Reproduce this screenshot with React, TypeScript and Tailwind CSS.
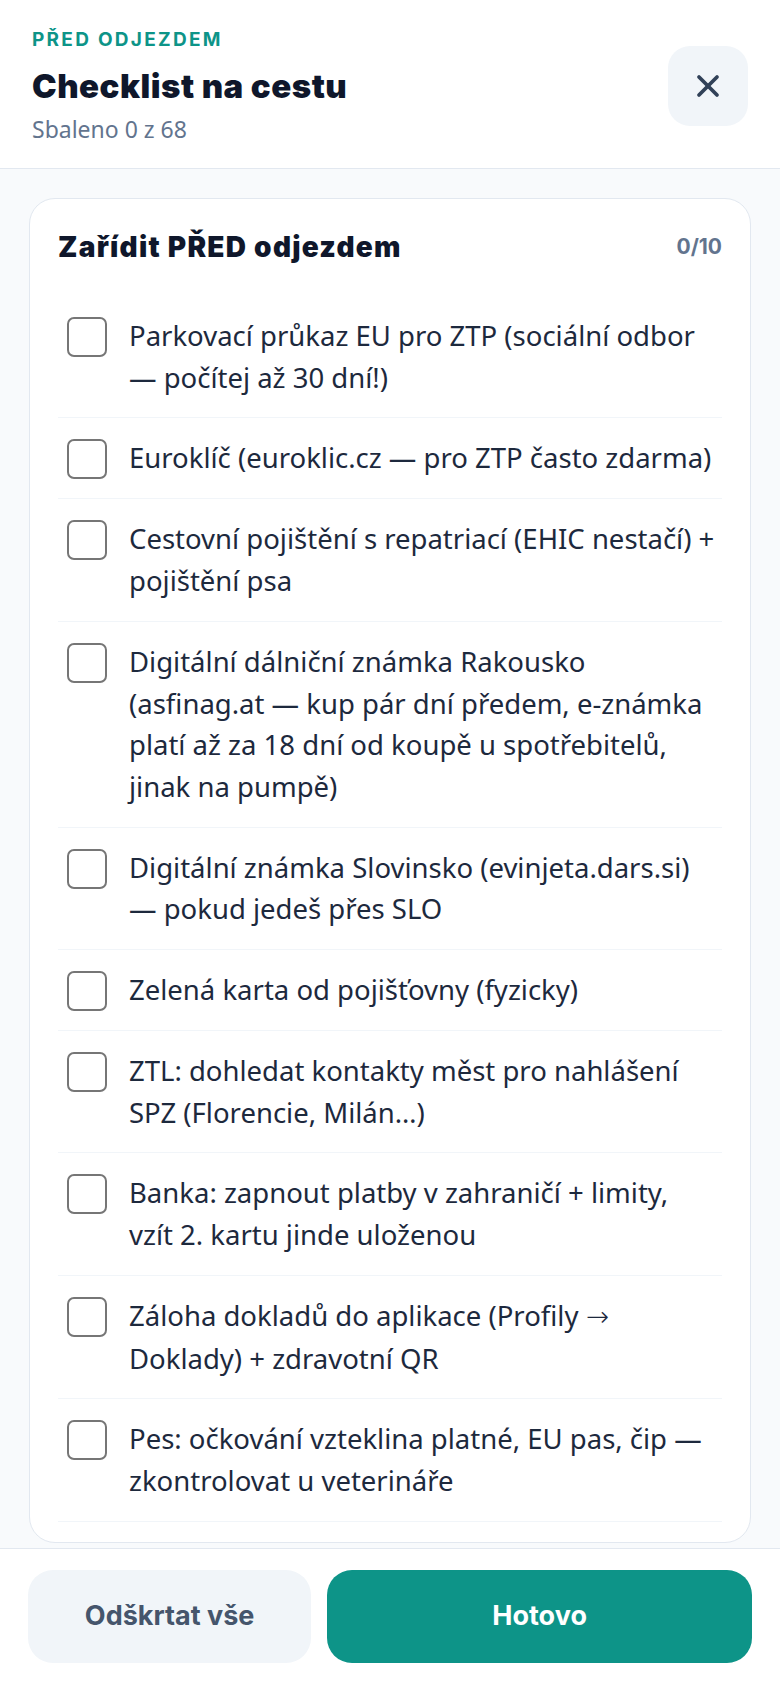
import { X } from "lucide-react";

// each entry is one checklist item, split where the text breaks onto a new line
const items: string[][] = [
  ["Parkovací průkaz EU pro ZTP (sociální odbor", "— počítej až 30 dní!)"],
  ["Euroklíč (euroklic.cz — pro ZTP často zdarma)"],
  ["Cestovní pojištění s repatriací (EHIC nestačí) +", "pojištění psa"],
  [
    "Digitální dálniční známka Rakousko",
    "(asfinag.at — kup pár dní předem, e-známka",
    "platí až za 18 dní od koupě u spotřebitelů,",
    "jinak na pumpě)",
  ],
  ["Digitální známka Slovinsko (evinjeta.dars.si)", "— pokud jedeš přes SLO"],
  ["Zelená karta od pojišťovny (fyzicky)"],
  ["ZTL: dohledat kontakty měst pro nahlášení", "SPZ (Florencie, Milán…)"],
  ["Banka: zapnout platby v zahraničí + limity,", "vzít 2. kartu jinde uloženou"],
  ["Záloha dokladů do aplikace (Profily →", "Doklady) + zdravotní QR"],
  ["Pes: očkování vzteklina platné, EU pas, čip —", "zkontrolovat u veterináře"],
];

// Noto's arrow is tiny, so draw it from a font with a full-size one
function Line({ text }: { text: string }) {
  const parts = text.split("→");
  return (
    <span className="block">
      {parts.map((p, i) => (
        <span key={i}>
          {i > 0 && <span className="font-['DejaVu_Sans',sans-serif] font-light">→</span>}
          {p}
        </span>
      ))}
    </span>
  );
}

function Row({ lines }: { lines: string[] }) {
  return (
    <label className="flex items-start gap-[22px] border-b border-slate-100 py-[19px] pl-[9px]">
      <span className="mt-[2px] h-10 w-10 shrink-0 rounded-[7px] border-2 border-[#767676] bg-white" />
      <span className="text-[27.5px] leading-[41.7px] whitespace-nowrap text-slate-800">
        {lines.map((l) => (
          <Line key={l} text={l} />
        ))}
      </span>
    </label>
  );
}

export default function App() {
  return (
    <div className="flex h-[1688px] w-full flex-col overflow-hidden bg-white font-['Noto_Sans','Open_Sans',sans-serif]">
      <header className="flex items-center justify-between border-b border-slate-200 px-8 pt-[27px] pb-[23px]">
        <div>
          <p className="font-['Inter',sans-serif] text-[19px] font-bold uppercase leading-[26px] tracking-[0.12em] text-[#0d9488]">
            Před odjezdem
          </p>
          <h1 className="mt-[13px] font-['Inter',sans-serif] text-[33px] font-black leading-[40px] tracking-[0.015em] text-slate-900">
            Checklist na cestu
          </h1>
          <p className="mt-[7px] text-[23px] leading-[32px] text-slate-500">Sbaleno 0 z 68</p>
        </div>
        <button
          type="button"
          className="flex h-20 w-20 items-center justify-center rounded-[22px] bg-slate-100 text-slate-700"
        >
          <X size={36} strokeWidth={2.5} />
        </button>
      </header>

      <main className="flex-1 overflow-hidden bg-slate-50 px-[29px] pt-[29px]">
        <section className="rounded-[26px] border border-slate-200 bg-white px-7 pt-[30px] pb-[20px]">
          <div className="mb-[31px] flex items-center justify-between">
            <h2 className="font-['Inter',sans-serif] text-[28px] font-black leading-[36px] tracking-[0.045em] text-slate-900">
              Zařídit PŘED odjezdem
            </h2>
            <span className="font-['Inter',sans-serif] text-[21px] font-bold text-slate-500">0/10</span>
          </div>
          <div>
            {items.map((lines) => (
              <Row key={lines[0]} lines={lines} />
            ))}
          </div>
        </section>
      </main>

      <footer className="flex gap-4 border-t border-slate-200 bg-white px-7 pt-[21px] pb-[25px] font-['Inter',sans-serif]">
        <button
          type="button"
          className="h-[93px] flex-[2] rounded-[25px] bg-slate-100 text-[27px] font-bold text-slate-600"
        >
          Odškrtat vše
        </button>
        <button
          type="button"
          className="h-[93px] flex-[3] rounded-[25px] bg-[#0d9488] text-[27px] font-bold text-white"
        >
          Hotovo
        </button>
      </footer>
    </div>
  );
}
